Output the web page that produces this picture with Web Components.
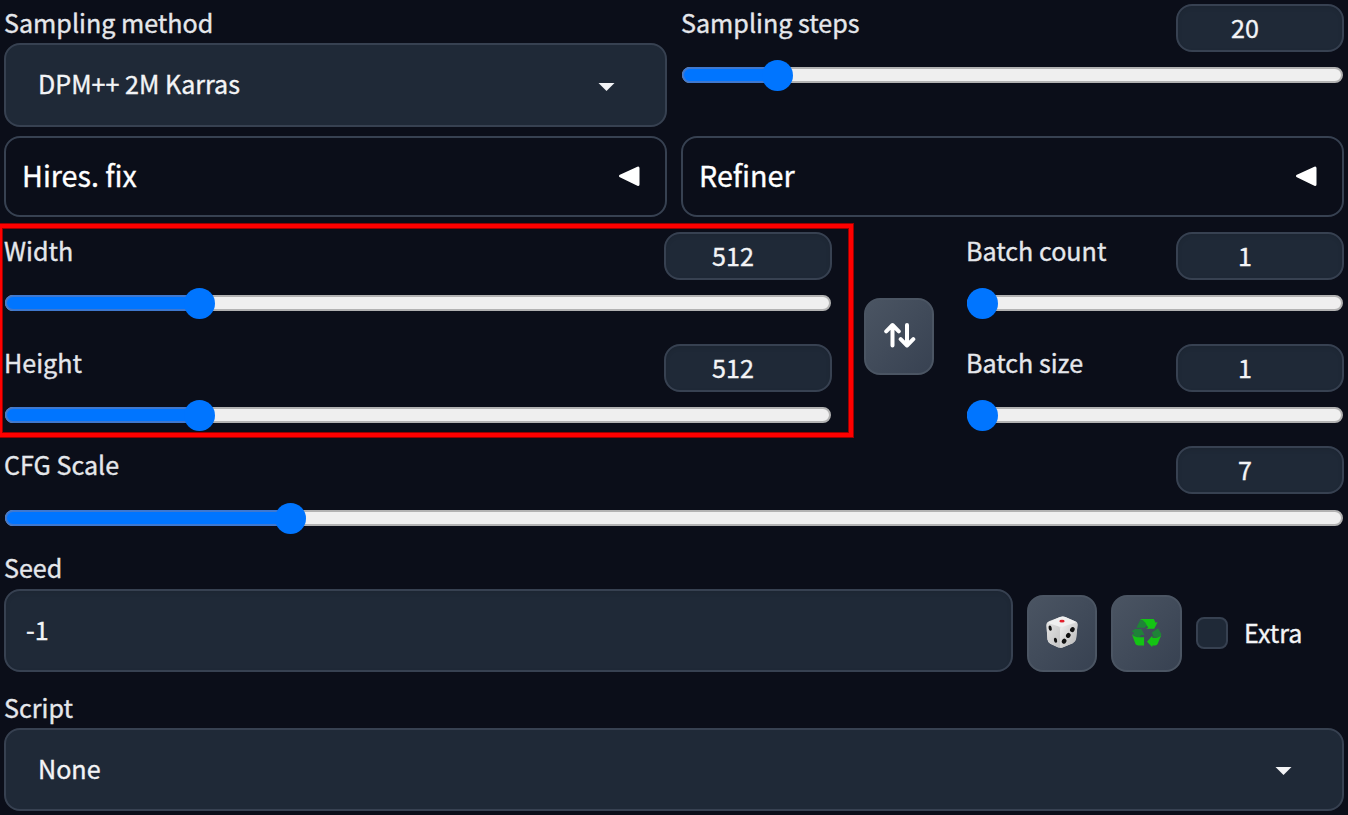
<!DOCTYPE html>
<html lang="en">
<head>
<meta charset="utf-8">
<title>Generation settings</title>
<style>
html,body{margin:0;height:100%;background:#0b0e19;overflow:hidden}
body{font-family:"Noto Sans CJK SC","Noto Sans",sans-serif;font-size:25.1px;color:#f3f4f6;-webkit-text-stroke:.35px currentColor}
</style>
</head>
<body>
<sd-panel></sd-panel>
<script>
const make = (name, html, setup) => {
  customElements.define(name, class extends HTMLElement {
    constructor() {
      super();
      const t = document.createElement('template');
      t.innerHTML = '<style>*{box-sizing:border-box}:host{box-sizing:border-box}</style>' + html;
      this.attachShadow({ mode: 'open' }).appendChild(t.content.cloneNode(true));
    }
    connectedCallback() { if (setup) setup(this, this.shadowRoot); }
  });
};

make('sd-label', `
<style>:host{display:block;height:39px;line-height:36px;color:#e5e7eb;white-space:nowrap}</style>
<slot></slot>`);

make('sd-slider', `
<style>
:host{display:block;min-width:0}
.head{display:flex;justify-content:space-between;height:48px}
.num{width:168px;height:48px;border:2px solid #374151;border-radius:16px;background:#1f2937;
  line-height:42px;text-align:center;padding-right:30px;box-shadow:inset 0 2px 4px rgba(0,0,0,.08)}
.rail{display:grid;grid-template-rows:16px;align-items:center;margin:var(--rail-gap,15px) 1px 0;height:16px}
.rail>*{grid-area:1/1}
.track{height:16px;border-radius:8px;border:2px solid #b2b2b2;background:#efefef}
.fill{height:16px;border-radius:8px 0 0 8px;border:2px solid #3f78cf;border-right:0;background:#0075ff;
  width:calc((100% - 31px) * var(--f) + 15px)}
.thumb{width:31px;height:31px;border-radius:50%;background:#0075ff;margin-left:calc((100% - 30.500px) * var(--f) - .5px)}
</style>
<div class="head"><sd-label><slot></slot></sd-label><div class="num"></div></div>
<div class="rail"><div class="track"></div><div class="fill"></div><div class="thumb"></div></div>`,
(el, root) => {
  root.querySelector('.num').textContent = el.getAttribute('value');
  const min = +el.getAttribute('min'), max = +el.getAttribute('max'), v = +el.getAttribute('value');
  root.querySelector('.rail').style.setProperty('--f', (v - min) / (max - min));
});

make('sd-select', `
<style>
:host{display:block;min-width:0}
.box{display:flex;align-items:center;justify-content:space-between;height:var(--h,84px);border:2px solid #374151;
  border-radius:16px;background:#1f2937;padding:0 50px 0 32px}
.v{line-height:40px;margin-top:-4px}
svg{display:block;margin-top:3px}
</style>
<sd-label><slot name="label"></slot></sd-label>
<div class="box"><span class="v"><slot></slot></span>
<svg width="17" height="8" viewBox="0 0 17 8"><path d="M.5 0h16L8.500 8z" fill="#f3f4f6"/></svg></div>`);

make('sd-accordion', `
<style>
:host{display:flex;align-items:center;justify-content:space-between;height:81px;border:2px solid #374151;
  border-radius:16px;padding:0 25px 0 16px;color:#fff;font-size:28.7px;min-width:0}
span{line-height:40px;margin-top:-3px}
svg{display:block}
</style>
<span><slot></slot></span>
<svg width="22" height="21" viewBox="0 0 22 21"><path d="M2.500 10 20 2v16.500z" fill="#fff" stroke="#fff" stroke-width="3" stroke-linejoin="round"/></svg>`);

make('sd-tool', `
<style>
:host{display:flex;align-items:center;justify-content:center;width:70px;height:77px;border:2px solid #4b5563;
  border-radius:16px;background:linear-gradient(to bottom right,#4b5563,#374151) border-box;flex:none}
</style><slot></slot>`);

make('sd-icon-swap', `
<style>:host,svg{display:block}:host{padding:0 1px 3px 0}</style>
<svg width="34" height="28" viewBox="0 0 34 28" fill="none" stroke="#fff" stroke-width="4" stroke-linecap="round" stroke-linejoin="round">
<path d="M10.500 24.500V4.500M4.200 10.300 10.500 4l6.300 6.300M25 4v20M18.700 18.200 25 24.500l6.300-6.300"/></svg>`);

make('sd-icon-die', `
<style>:host,svg{display:block}:host{padding-bottom:3px}</style>
<svg width="32" height="32" viewBox="0.500 0 33 33">
<defs>
<linearGradient id="l" x1="0" y1="0" x2="1" y2="1"><stop offset="0" stop-color="#e2e2e2"/><stop offset="1" stop-color="#c4c4c4"/></linearGradient>
<linearGradient id="r" x1="0" y1="0" x2="1" y2="1"><stop offset="0" stop-color="#f2f2f2"/><stop offset="1" stop-color="#b5b5b5"/></linearGradient>
</defs>
<path d="M3.500 5.500Q1 6.500 1 10l1 14q.3 3 3 4.500l8 3.800q2 .9 4.500.2l10.500-4.500q3-1.500 3.500-4.500L33 9.500q.2-3-2.800-4L21 1.200q-3-1-6-.2z" fill="#dedede"/>
<path d="M1 9q0-3 3-2l9 3.500q2 .8 2 4v18q-1.500.2-3-.5l-7-3.500q-2.700-1.500-3-4.500z" fill="url(#l)"/>
<path d="M15 14q0-3 2.500-4L30 5.800q3-.5 3 3.200l-1.500 14.500q-.5 3-3.500 4.500l-10 4.300q-1.500.6-3 .3z" fill="url(#r)"/>
<path d="M3 6.500 15 1q3-1 6 .2l9.500 4.300q1.500.8 0 1.500L18 10.800q-2 .6-4 0L4 7.800q-2-.6-1-1.300z" fill="#f0f0f0"/>
<ellipse cx="17" cy="5.300" rx="2.700" ry="1.400" fill="#e0202c"/>
<g fill="#111"><ellipse cx="4.800" cy="12.500" rx="1.600" ry="2.700" transform="rotate(-14 4.800 12.500)"/>
<ellipse cx="10.300" cy="25" rx="1.600" ry="2.700" transform="rotate(-14 10.300 25)"/>
<ellipse cx="27.700" cy="14" rx="2.300" ry="2.700" transform="rotate(30 27.700 14)"/>
<ellipse cx="23.500" cy="20" rx="2.300" ry="2.700" transform="rotate(30 23.500 20)"/>
<ellipse cx="19.200" cy="26" rx="2.300" ry="2.700" transform="rotate(30 19.200 26)"/></g>
</svg>`);

make('sd-icon-recycle', `
<style>:host,svg{display:block}:host{padding-bottom:3px}</style>
<svg width="31" height="29" viewBox="0 0 32 30">
<g fill="#1f8338"><path d="M9.500 2 15.500 3 18 7l-4 3H5.500z"/><path d="M3.800 11.500h7L14 17.800l-3.300-.6L8 20.500 2 17.500 3 15l-2.500-1z"/><path d="M21.500 15 28 10.500l3.500 6.300-2.300 3.200-6-.5z"/></g>
<g fill="#14c414"><path d="M9 1h14.500l2 3.800 2-.6-3.500 7H15.500l2.200-1.500-3-5Q13.200 2.300 9 1z"/>
<path d="M.8 16.500Q3 19.800 6.500 20h7v8.500H7.500q-2.200 0-3-1.800z"/>
<path d="M31.300 17.500 27.500 27q-.7 1.500-2.500 1.500h-3v1.700L16.500 24.500 22 18.300V20.500h4q3 0 5.300-3z"/></g>
</svg>`);

make('sd-seed', `
<style>
:host{display:block}
.label{display:block;height:42px;line-height:40px;color:#e5e7eb}
.row{display:flex;align-items:flex-end;gap:14px;height:83px}
.in{flex:1;height:83px;border:2px solid #374151;border-radius:16px;background:#1f2937;padding-left:20px;
  line-height:76px;box-shadow:inset 0 2px 4px rgba(0,0,0,.08)}
.check{display:flex;align-items:center;gap:16px;height:77px;width:148px}
.check i{width:32px;height:32px;margin-top:-2px;border:2px solid #374151;border-radius:8px;background:#1f2937}
.check span{margin-top:-3px}
.wide{width:71px}
</style>
<span class="label">Seed</span>
<div class="row"><div class="in">-1</div>
<sd-tool><sd-icon-die></sd-icon-die></sd-tool>
<sd-tool class="wide"><sd-icon-recycle></sd-icon-recycle></sd-tool>
<div class="check"><i></i><span>Extra</span></div></div>`);

make('sd-panel', `
<style>
:host{display:flex;flex-direction:column;width:1348px;height:815px;padding:4px}
.two{display:grid;grid-template-columns:1fr 1fr;gap:14px}
.acc{margin-top:9px}
.dims{display:grid;grid-template-columns:828px 70px 378px;gap:32px;margin-top:15px;align-items:center}
.stack{display:grid;gap:33px;position:relative}
.mark{position:absolute;left:-6px;top:-8px;width:855px;height:213px;border:4px solid #f00;
  box-shadow:0 0 0 1px #900,inset 0 0 0 1px #900}
.swap{margin-top:18px}
.cfg{margin-top:23px;--rail-gap:16px}
.seed{margin-top:21px}
.script{margin-top:17px;--h:83px}
</style>
<div class="two">
<sd-select><span slot="label">Sampling method</span>DPM++ 2M Karras</sd-select>
<sd-slider value="20" min="1" max="150">Sampling steps</sd-slider>
</div>
<div class="two acc"><sd-accordion>Hires. fix</sd-accordion><sd-accordion>Refiner</sd-accordion></div>
<div class="dims">
<div class="stack">
<sd-slider value="512" min="64" max="2048">Width</sd-slider>
<sd-slider value="512" min="64" max="2048">Height</sd-slider>
<div class="mark"></div>
</div>
<sd-tool class="swap"><sd-icon-swap></sd-icon-swap></sd-tool>
<div class="stack">
<sd-slider value="1" min="1" max="100">Batch count</sd-slider>
<sd-slider value="1" min="1" max="8">Batch size</sd-slider>
</div>
</div>
<sd-slider class="cfg" value="7" min="1" max="30">CFG Scale</sd-slider>
<sd-seed class="seed"></sd-seed>
<sd-select class="script"><span slot="label">Script</span>None</sd-select>`);
</script>
</body>
</html>
